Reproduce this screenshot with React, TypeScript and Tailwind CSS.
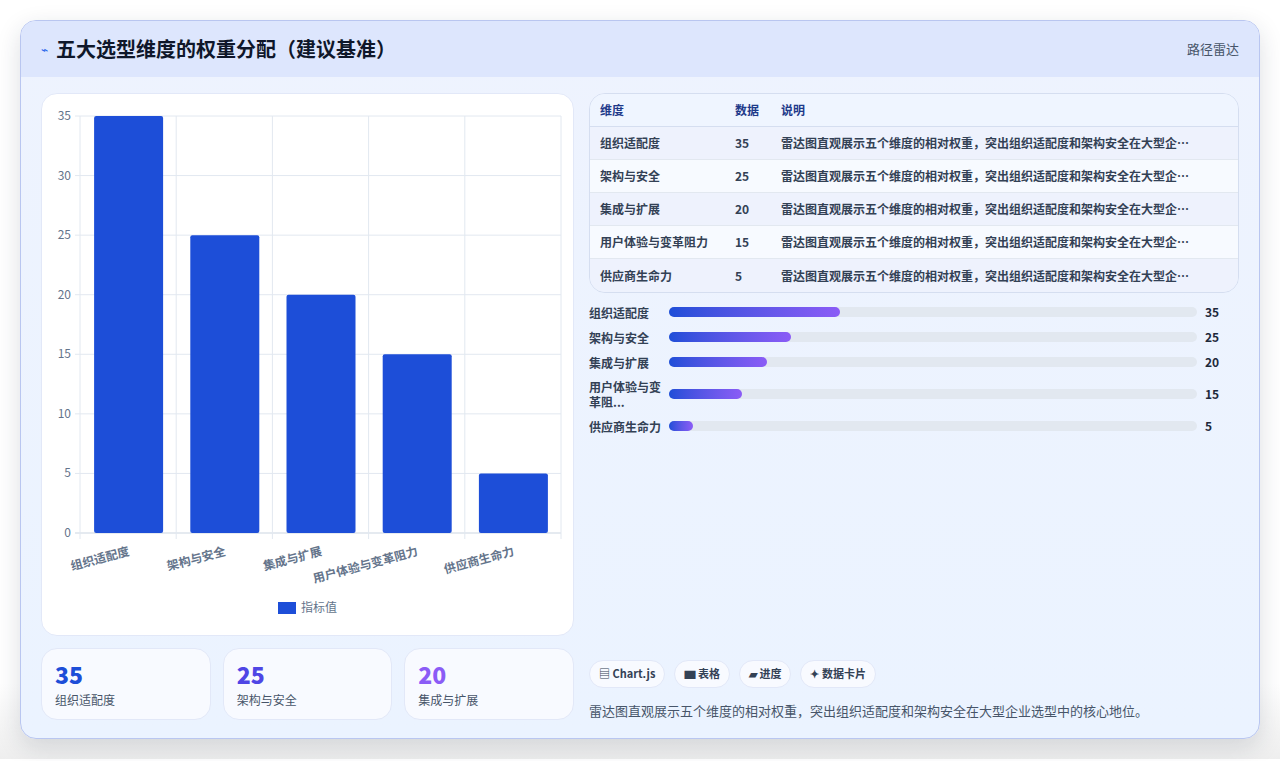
import React from 'react';

const rows = [
  { name: '组织适配度', short: '组织适配度', value: 35 },
  { name: '架构与安全', short: '架构与安全', value: 25 },
  { name: '集成与扩展', short: '集成与扩展', value: 20 },
  { name: '用户体验与变革阻力', short: '用户体验与变革阻...', value: 15 },
  { name: '供应商生命力', short: '供应商生命力', value: 5 },
];

const desc = '雷达图直观展示五个维度的相对权重，突出组织适配度和架构安全在大型企业选型中的核心地位。';
const font = { fontFamily: '"Noto Sans CJK SC", "Liberation Sans", sans-serif' };

function BarChart() {
  // plot area in card coordinates
  const left = 38, right = 519, top = 22, bottom = 439;
  const unit = (bottom - top) / 35;
  const step = (right - left) / 5;
  return (
    <svg width="533" height="543" viewBox="0 0 533 543" style={font}>
      {[0, 5, 10, 15, 20, 25, 30, 35].map((t) => {
        const y = bottom - t * unit;
        return (
          <g key={t}>
            <line x1={left - 5} x2={right} y1={y} y2={y} stroke={t === 0 ? '#cbd5e1' : '#e2e8f0'} />
            <text x={left - 9} y={y + 4} fontSize="12" fill="#64748b" textAnchor="end">{t}</text>
          </g>
        );
      })}
      {[0, 1, 2, 3, 4, 5].map((i) => (
        <line key={i} x1={left + i * step} x2={left + i * step} y1={top} y2={bottom + 6} stroke="#e2e8f0" />
      ))}
      {rows.map((r, i) => {
        const cx = left + step * (i + 0.5);
        const h = r.value * unit;
        return (
          <g key={r.name}>
            <rect x={cx - 34} y={bottom - h} width="69" height={h} fill="#1d4ed8" rx="2" />
            <text
              x={cx + 2}
              y={bottom + 22}
              fontSize="12"
              fontWeight="600"
              fill="#64748b"
              textAnchor="end"
              transform={`rotate(-15 ${cx + 2} ${bottom + 22})`}
            >
              {r.name}
            </text>
          </g>
        );
      })}
      <rect x="236" y="508" width="18" height="12" fill="#1d4ed8" />
      <text x="259" y="518" fontSize="12" fill="#64748b">指标值</text>
    </svg>
  );
}

export default function App() {
  return (
    <div className="min-h-[761px] bg-white" style={font}>
      <div className="px-5 pt-5 pb-5 bg-gradient-to-b from-white from-90% to-[#eeeeee]">
        <div className="rounded-2xl border border-[#b9c6f0] shadow-[0_8px_24px_rgba(30,41,59,0.15)] overflow-hidden bg-gradient-to-b from-[#eef3fe] to-[#ebf3ff]">
          <div className="h-[56px] bg-[#dde6fd] flex items-center justify-between px-5">
            <div className="flex items-center gap-2">
              <span className="text-[#2563eb] text-xs">⌁</span>
              <h1 className="text-[20px] font-bold text-[#0f172a]">五大选型维度的权重分配（建议基准）</h1>
            </div>
            <span className="text-[13px] text-[#475569]">路径雷达</span>
          </div>
          <div className="flex gap-[15px] px-5 pt-[16px] pb-[18px]">
            <div className="w-[533px] shrink-0 flex flex-col gap-3">
              <div className="h-[543px] bg-white rounded-2xl border border-[#e2e8f8]">
                <BarChart />
              </div>
              <div className="grid grid-cols-3 gap-3">
                {rows.slice(0, 3).map((r, i) => (
                  <div key={r.name} className="h-[72px] rounded-2xl bg-[#f8faff] border border-[#e2e8f8] px-[13px] pt-[11px]">
                    <div className={`text-[23px] font-extrabold leading-7 ${i === 0 ? 'text-[#1d4ed8]' : i === 1 ? 'text-[#4f46e5]' : 'text-[#8b5cf6]'}`}>{r.value}</div>
                    <div className="text-xs text-[#475569] mt-[4px]">{r.name}</div>
                  </div>
                ))}
              </div>
            </div>
            <div className="flex-1 min-w-0 flex flex-col">
              <div className="rounded-2xl border border-[#d5def0] overflow-hidden text-xs">
                <div className="flex h-[33px] items-center px-[10px] font-bold text-[#1e3a8a] bg-[#eff5ff] border-b border-[#d5def0]">
                  <div className="w-[135px] shrink-0">维度</div>
                  <div className="w-[46px] shrink-0">数据</div>
                  <div>说明</div>
                </div>
                {rows.map((r, i) => (
                  <div key={r.name} className={`flex h-[33px] items-center px-[10px] font-semibold text-[#334155] ${i % 2 === 0 ? 'bg-[#eef2fd]' : 'bg-[#f7faff]'} ${i < 4 ? 'border-b border-[#e2e8f0]' : ''}`}>
                    <div className="w-[135px] shrink-0">{r.name}</div>
                    <div className="w-[46px] shrink-0">{r.value}</div>
                    <div className="flex-1 min-w-0 truncate pr-8">{desc}</div>
                  </div>
                ))}
              </div>
              <div className="flex flex-col gap-[9px] mt-[11px] pr-5">
                {rows.map((r) => (
                  <div key={r.name} className="flex items-center text-xs font-semibold text-[#334155]">
                    <div className="w-[80px] shrink-0 leading-[15px]">{r.short}</div>
                    <div className="flex-1 h-[10px] rounded-full bg-[#e2e8f0]">
                      <div className="h-full rounded-full bg-gradient-to-r from-[#1d4ed8] to-[#8b5cf6]" style={{ width: `${(r.value / 108) * 100}%` }} />
                    </div>
                    <div className="w-[22px] shrink-0 pl-2 font-bold text-[#1e293b]">{r.value}</div>
                  </div>
                ))}
              </div>
              <div className="mt-auto flex gap-[9px]">
                {['▤ Chart.js', '▆ 表格', '▰ 进度', '✦ 数据卡片'].map((c) => (
                  <span key={c} className="h-[28px] px-[9px] rounded-full bg-[#f8faff] border border-[#e2e8f8] text-[11px] font-bold text-[#334155] flex items-center">{c}</span>
                ))}
              </div>
              <p className="text-[13px] text-[#475569] mt-[13px]">{desc}</p>
            </div>
          </div>
        </div>
      </div>
    </div>
  );
}
